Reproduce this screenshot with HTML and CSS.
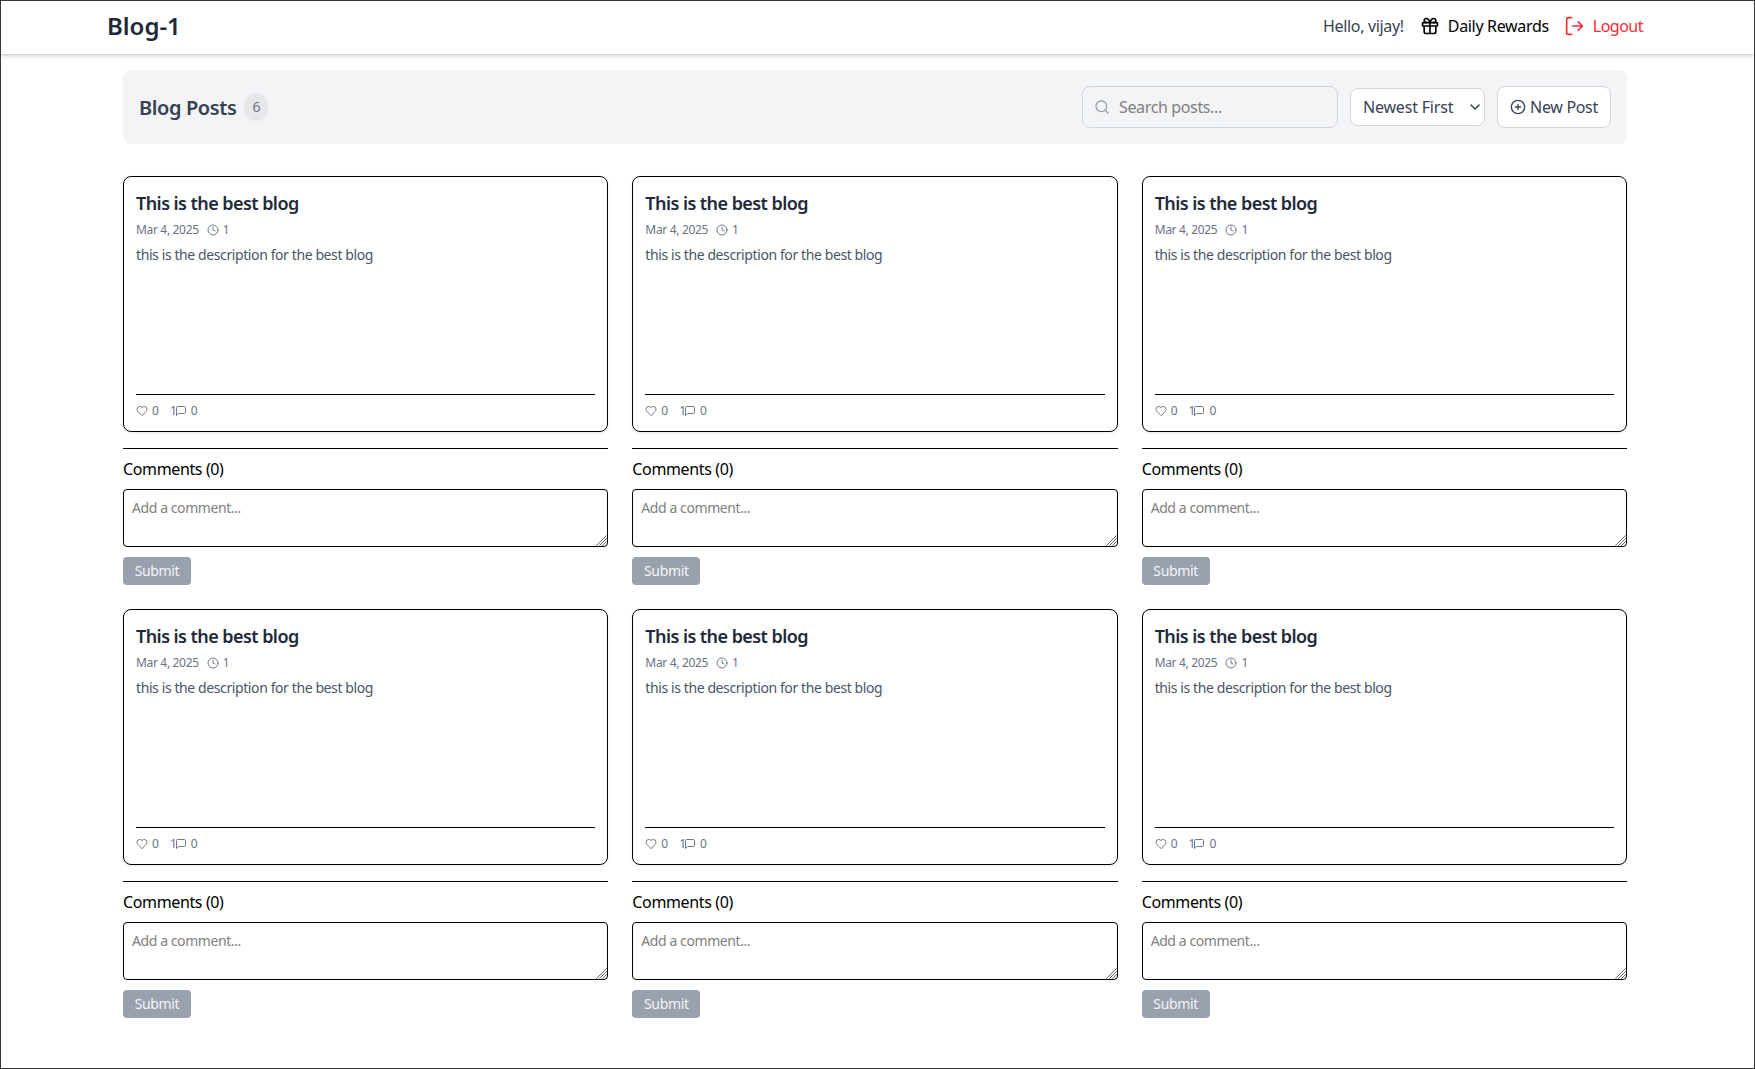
FILE: index.html
```html
<!DOCTYPE html>
<html lang="en">
<head>
<meta charset="utf-8">
<title>Blog-1</title>
<link rel="stylesheet" href="styles.css">
</head>
<body>
<svg width="0" height="0" class="sprite" aria-hidden="true">
  <symbol id="gift" viewBox="0 0 24 24"><rect x="3" y="8" width="18" height="4" rx="1"/><path d="M12 8v13M19 12v7a2 2 0 0 1-2 2H7a2 2 0 0 1-2-2v-7M7.500 8a2.500 2.500 0 0 1 0-5A4.800 8 0 0 1 12 8a4.800 8 0 0 1 4.500-5 2.500 2.500 0 0 1 0 5"/></symbol>
  <symbol id="logout" viewBox="0 0 24 24"><path d="M8 22H4a2 2 0 0 1-2-2V4a2 2 0 0 1 2-2h4M16 17l5-5-5-5M21 12H9"/></symbol>
  <symbol id="search" viewBox="0 0 24 24"><circle cx="11" cy="11" r="8"/><path d="m21 21-4.300-4.300"/></symbol>
  <symbol id="plus" viewBox="0 0 24 24"><circle cx="12" cy="12" r="10"/><path d="M8 12h8M12 8v8"/></symbol>
  <symbol id="clock" viewBox="0 0 24 24"><circle cx="12" cy="12" r="10"/><path d="M12 6v6l4 2"/></symbol>
  <symbol id="heart" viewBox="0 0 24 24"><path d="M19 14c1.490-1.460 3-3.210 3-5.500A5.500 5.500 0 0 0 16.500 3c-1.760 0-3 .5-4.500 2-1.500-1.500-2.740-2-4.500-2A5.500 5.500 0 0 0 2 8.500c0 2.300 1.500 4.050 3 5.500l7 7Z"/></symbol>
  <symbol id="message" viewBox="0 0 24 24"><path d="M21 15a2 2 0 0 1-2 2H7l-4 4V5a2 2 0 0 1 2-2h14a2 2 0 0 1 2 2z"/></symbol>
  <symbol id="chevron" viewBox="0 0 10 6"><path d="M1 1l4 4 4-4"/></symbol>
  <symbol id="grip" viewBox="0 0 11 11"><path d="M.5 10.500l10-10M3.500 10.500l7-7M6.500 10.500l4-4M9.500 10.500l1-1"/></symbol>
</svg>
<header class="header">
  <h1 class="brand">Blog-1</h1>
  <nav class="nav">
    <span class="hello">Hello, vijay!</span>
    <a class="nav-link"><svg class="icon-20"><use href="#gift"/></svg><span class="rewards">Daily Rewards</span></a>
    <a class="nav-link logout"><svg class="icon-20"><use href="#logout"/></svg><span>Logout</span></a>
  </nav>
</header>
<main class="main">
  <section class="toolbar">
    <h2 class="toolbar-title">Blog Posts</h2>
    <span class="count">6</span>
    <div class="search"><svg class="icon-16"><use href="#search"/></svg><input class="search-input" placeholder="Search posts..."></div>
    <div class="sort-wrap"><select class="sort"><option>Newest First</option></select><svg class="chevron"><use href="#chevron"/></svg></div>
    <button class="new-post"><svg class="icon-16"><use href="#plus"/></svg><span>New Post</span></button>
  </section>
  <section class="grid" id="posts"></section>
</main>
<template id="post">
  <div class="post">
    <article class="card">
      <h3 class="title">This is the best blog</h3>
      <div class="meta"><span class="date">Mar 4, 2025</span><svg class="icon-12 clock"><use href="#clock"/></svg><span>1</span></div>
      <p class="desc">this is the description for the best blog</p>
      <footer class="stats"><svg class="icon-12"><use href="#heart"/></svg><span>0</span><span class="replies">1</span><svg class="icon-12 message"><use href="#message"/></svg><span>0</span></footer>
    </article>
    <div class="comments">
      <h4 class="comments-title">Comments (0)</h4>
      <div class="comment-box"><textarea class="comment-input" placeholder="Add a comment..."></textarea><svg class="grip"><use href="#grip"/></svg></div>
      <button class="submit">Submit</button>
    </div>
  </div>
</template>
<script src="app.js"></script>
</body>
</html>
```
FILE: app.js
```js
const grid = document.getElementById('posts');
const template = document.getElementById('post');
for (let i = 0; i < 6; i++) grid.append(template.content.cloneNode(true));
```
FILE: styles.css
```css
* { box-sizing: border-box; margin: 0; padding: 0; }
body { height: 1069px; border: 1px solid #363636; background: #fff; color: #000; font: 16px/24px "Noto Sans", sans-serif; letter-spacing: -.33px; overflow: hidden; }
button, input, select, textarea { font: inherit; letter-spacing: inherit; }
svg { fill: none; stroke: currentColor; stroke-width: 2; stroke-linecap: round; stroke-linejoin: round; flex: none; }
.sprite { position: absolute; }
.icon-20 { width: 20px; height: 20px; }
.icon-16 { width: 16px; height: 16px; }
.icon-12 { width: 12px; height: 12px; stroke-width: 1.9; }
.header { height: 53px; padding: 0 111px 3px 106px; display: flex; align-items: center; justify-content: space-between; box-shadow: 0 1px 3px rgba(0,0,0,.16), 0 3px 6px rgba(0,0,0,.08); }
.brand { font-size: 24px; line-height: 32px; font-weight: 600; letter-spacing: 0; color: #1e2939; }
.nav { display: flex; gap: 16px; align-items: center; }
.nav-link { display: flex; gap: 8px; align-items: center; }
.hello { color: #364153; }
.logout { color: #fb2c36; letter-spacing: -.5px; }
.main { padding: 16px 127px 0 122px; }
.toolbar { height: 74px; padding: 0 16px; border-radius: 8px; background: #f3f4f6; display: flex; align-items: center; }
.toolbar-title { padding-top: 2px; font-size: 20px; font-weight: 600; line-height: 28px; letter-spacing: -.4px; color: #364153; }
.count { width: 24px; height: 28px; margin: 0 auto 0 8px; border-radius: 12px; background: #e5e7eb; color: #6a7282; font-size: 14px; line-height: 28px; text-align: center; }
.search { width: 256px; height: 42px; padding: 0 11px; display: flex; align-items: center; gap: 9px; border: 1px solid #d1d5dc; border-radius: 8px; color: #99a1af; }
.search-input { width: 200px; border: 0; outline: 0; background: transparent; letter-spacing: -.36px; }
::placeholder { color: #808080; opacity: 1; }
.sort-wrap { position: relative; margin-left: 12px; color: #364153; }
.sort { display: block; width: 135px; height: 38px; padding: 0 0 0 12px; border: 1px solid #d1d5dc; border-radius: 8px; background: #fff; color: #364153; appearance: none; letter-spacing: -.19px; }
.chevron { position: absolute; right: 5px; top: 16px; width: 10px; height: 6px; stroke-width: 1.5; pointer-events: none; }
.new-post { width: 114px; height: 42px; margin-left: 12px; display: flex; align-items: center; justify-content: center; gap: 4px; border: 1px solid #d1d5dc; border-radius: 8px; background: #fff; color: #364153; }
.grid { margin-top: 32px; display: grid; grid-template-columns: repeat(3, minmax(0, 1fr)); gap: 24px; }
.card { height: 256px; padding: 12px; border: 1px solid #000; border-radius: 8px; display: flex; flex-direction: column; box-shadow: 0 1px 3px rgba(0,0,0,.1); }
.title { font-size: 18px; line-height: 28px; font-weight: 600; letter-spacing: -.56px; color: #1e2939; }
.meta, .stats { display: flex; align-items: center; color: #6a7282; font-size: 12px; line-height: 16px; }
.meta { margin-top: 5px; gap: 4px; }
.date { margin-right: 4px; }
.clock { margin-top: -1px; }
.desc { margin-top: 7px; font-size: 14px; line-height: 20px; letter-spacing: -.4px; color: #4a5565; }
.stats { margin-top: auto; padding-top: 8px; border-top: 1px solid #000; gap: 4px; letter-spacing: 0; }
.replies { margin: 0 -5px 0 7px; }
.message { margin: -1px 0 0 -1px; }
.comments { margin-top: 16px; padding-top: 8px; border-top: 1px solid #000; }
.comments-title { font-size: 16px; font-weight: 400; letter-spacing: -.37px; }
.comment-box { position: relative; margin-top: 8px; }
.comment-input { display: block; width: 100%; height: 58px; padding: 8px; border: 1px solid #000; border-radius: 4px; font-size: 14px; line-height: 20px; letter-spacing: -.42px; resize: none; }
.grip { position: absolute; right: 1px; bottom: 1px; width: 11px; height: 11px; stroke: #666; stroke-width: 1; pointer-events: none; }
.submit { display: block; width: 68px; height: 28px; margin-top: 10px; border: 0; border-radius: 4px; background: #99a1af; color: #f3f4f6; font-size: 14px; line-height: 20px; }
```
